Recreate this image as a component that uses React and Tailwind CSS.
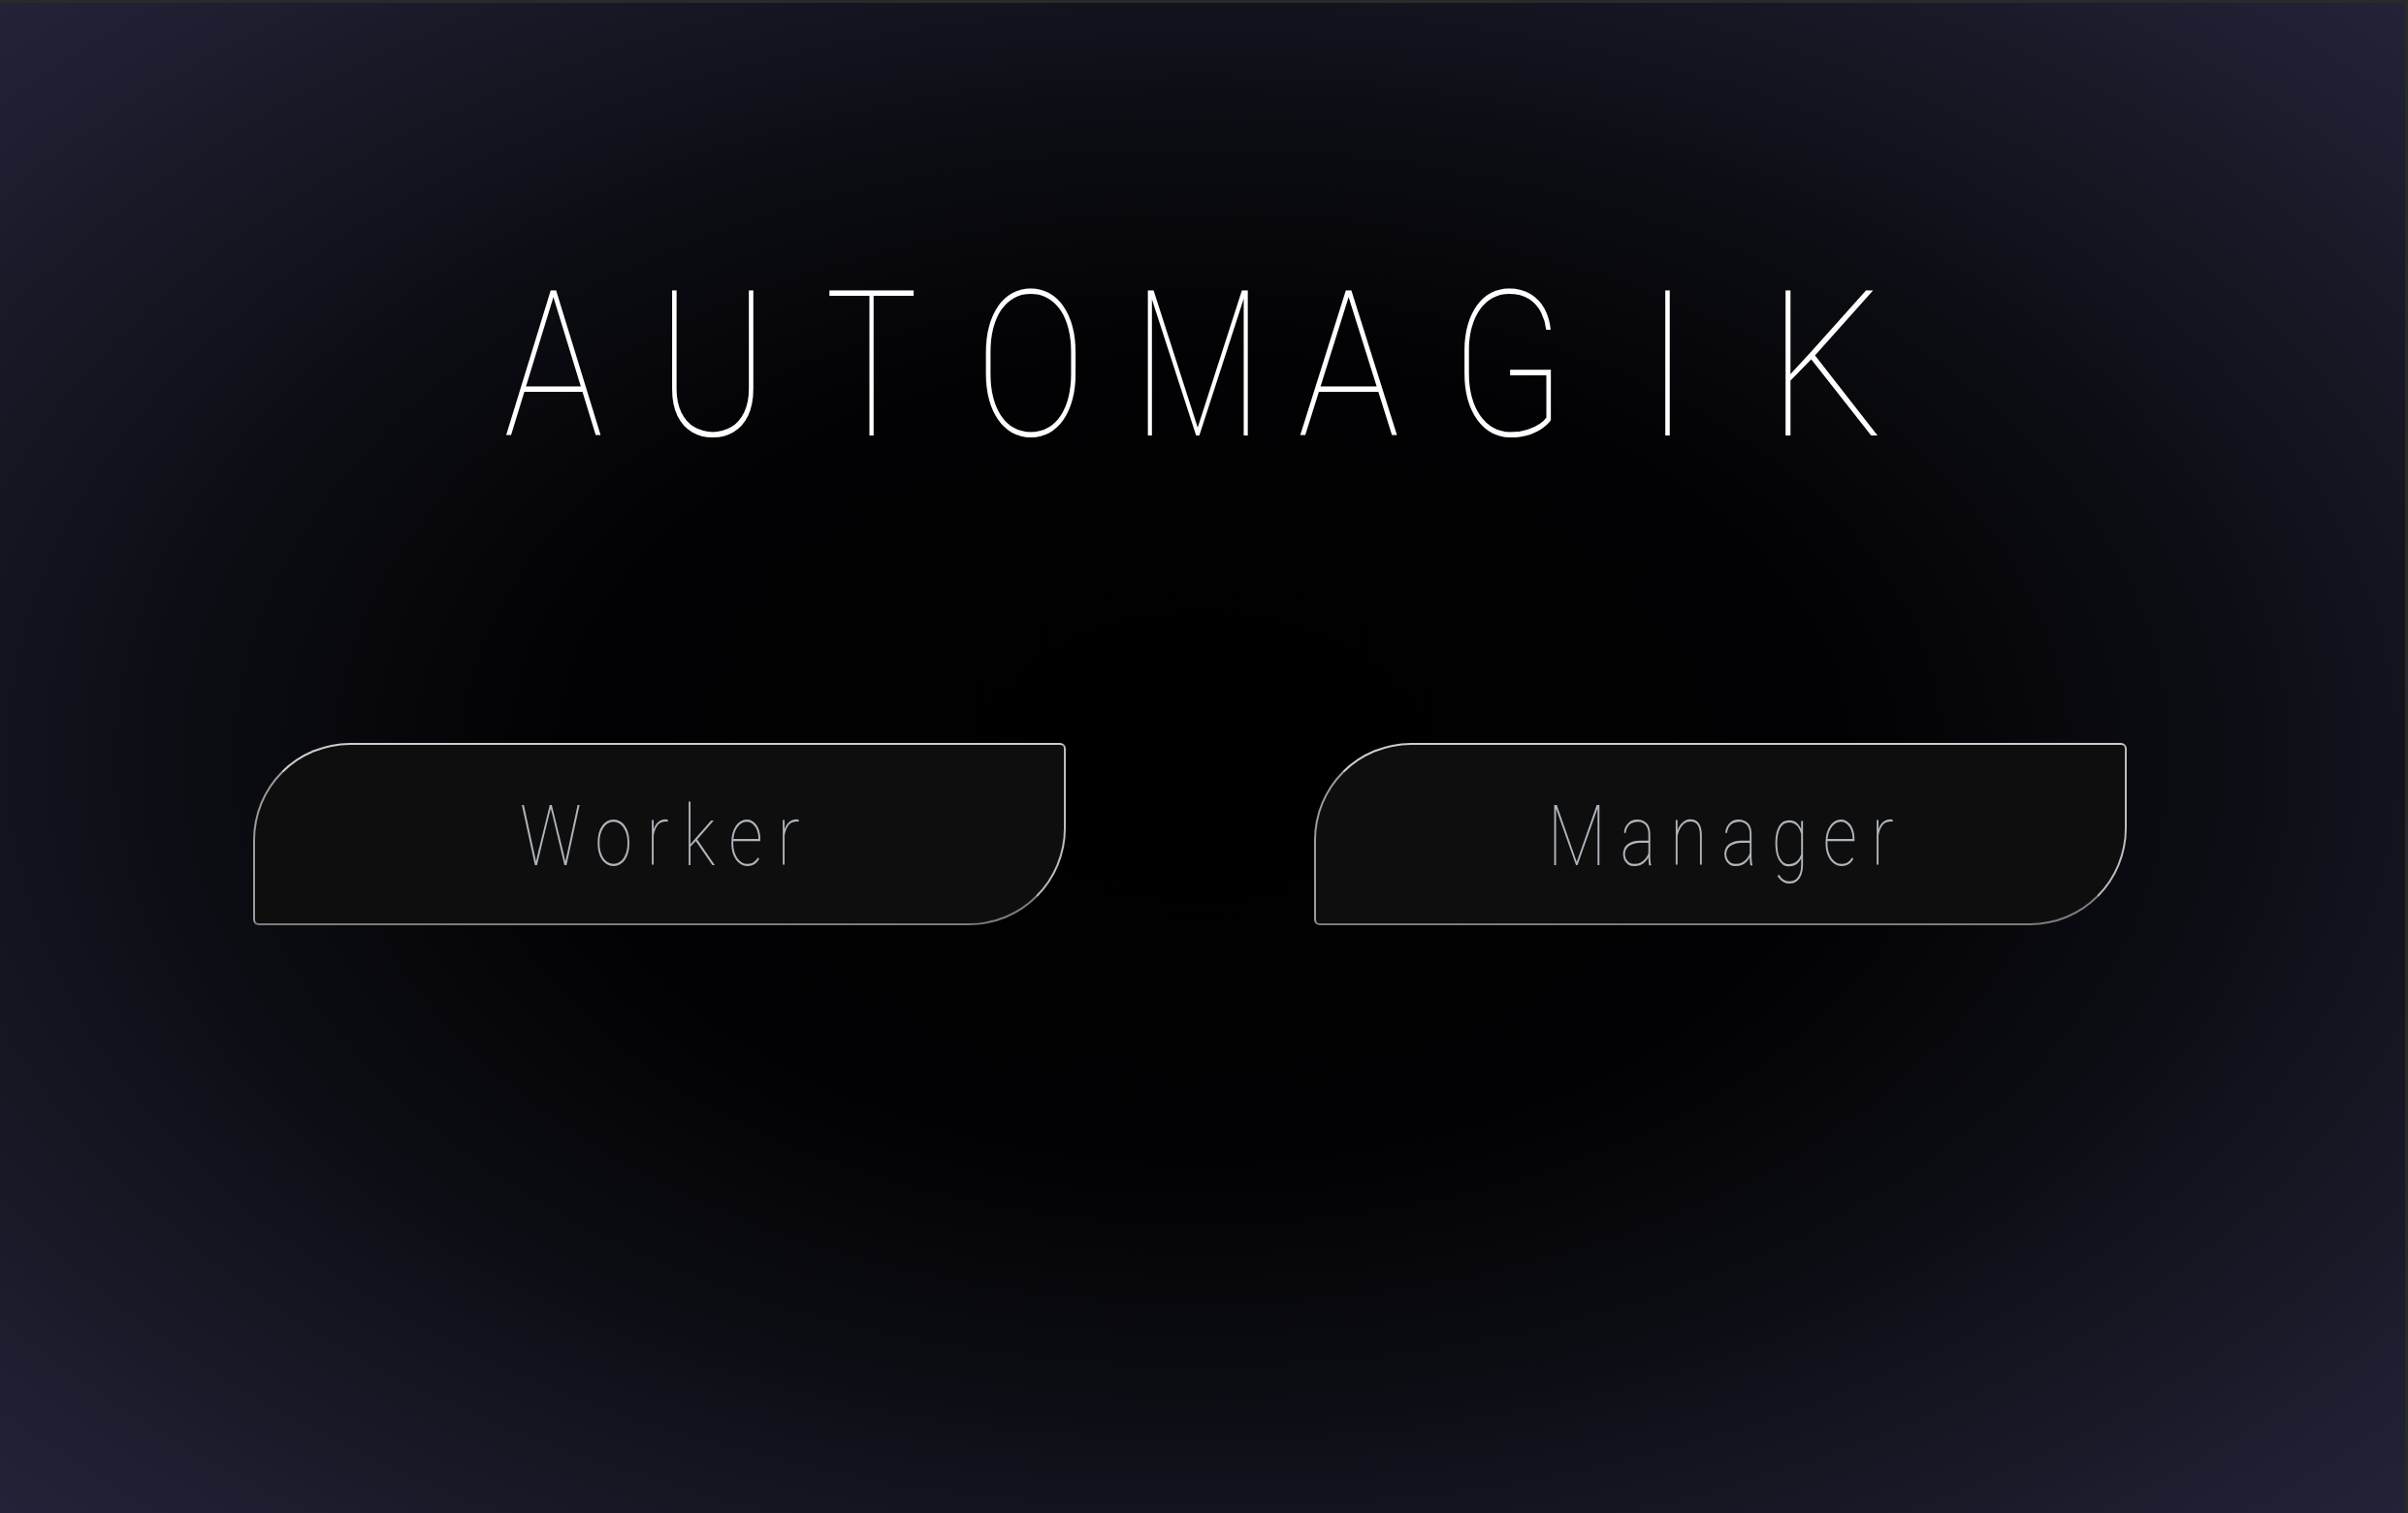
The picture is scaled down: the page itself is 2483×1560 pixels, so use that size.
import { useState } from 'react';

const roles = ['Worker', 'Manager'];

// glyph width tweaks so the thin Roboto caps read like the condensed original
const titleLetters = [
    { ch: 'A', cls: 'scale-x-[0.82]' },
    { ch: 'U', cls: 'scale-x-[0.82]' },
    { ch: 'T', cls: 'scale-x-[0.76]' },
    { ch: 'O', cls: 'scale-x-[0.82]' },
    { ch: 'M', cls: 'scale-x-[0.74]' },
    { ch: 'A', cls: 'scale-x-[0.84]' },
    { ch: 'G', cls: 'scale-x-[0.82]' },
    { ch: 'I', cls: 'scale-x-[0.82]' },
    { ch: 'K', cls: 'scale-x-[0.9]' },
];

const RoleButton = ({ label, onClick }) => (
    <button
        type="button"
        onClick={onClick}
        className="flex items-center justify-center w-[838px] h-[188px] bg-[#0e0e0e] border-2 border-t-[#cdcdcd] border-r-[#bdbdbd] border-b-[#7c7c7c] border-l-[#9c9c9c] rounded-tl-[100px] rounded-br-[100px] rounded-tr-[6px] rounded-bl-[6px] pt-[4px]"
    >
        <span
            className="block scale-x-[0.8] text-[88px] font-thin tracking-[18px] pl-[18px] text-[#aeb5bc] leading-none"
            style={{ fontFamily: 'Roboto, "DejaVu Sans", sans-serif' }}
        >
            {label}
        </span>
    </button>
);

export default function App() {
    const [role, setRole] = useState(null);

    return (
        <div className="w-[2483px] h-[1560px] overflow-hidden border-t-[3px] border-r-[3px] border-[#2a2a2a] bg-[radial-gradient(ellipse_at_center,#000000_0%,#020204_38%,#0d0e15_62%,#191a28_82%,#222338_100%)]">
            <div className="flex flex-col items-center pt-[269px] pr-[26px]">
                <h1
                    aria-label="AUTOMAGIK"
                    className="flex text-[210px] font-thin leading-none text-white"
                    style={{ fontFamily: 'Roboto, "DejaVu Sans", sans-serif' }}
                >
                    {titleLetters.map((l, i) => (
                        <span key={i} className="w-[164px] text-center">
                            <span className={`inline-block ${l.cls}`}>{l.ch}</span>
                        </span>
                    ))}
                </h1>
                <div className="flex gap-[256px] mt-[284px]">
                    {roles.map((r) => (
                        <RoleButton key={r} label={r} onClick={() => setRole(r)} />
                    ))}
                </div>
                {role && <span className="sr-only">{role}</span>}
            </div>
        </div>
    );
}
